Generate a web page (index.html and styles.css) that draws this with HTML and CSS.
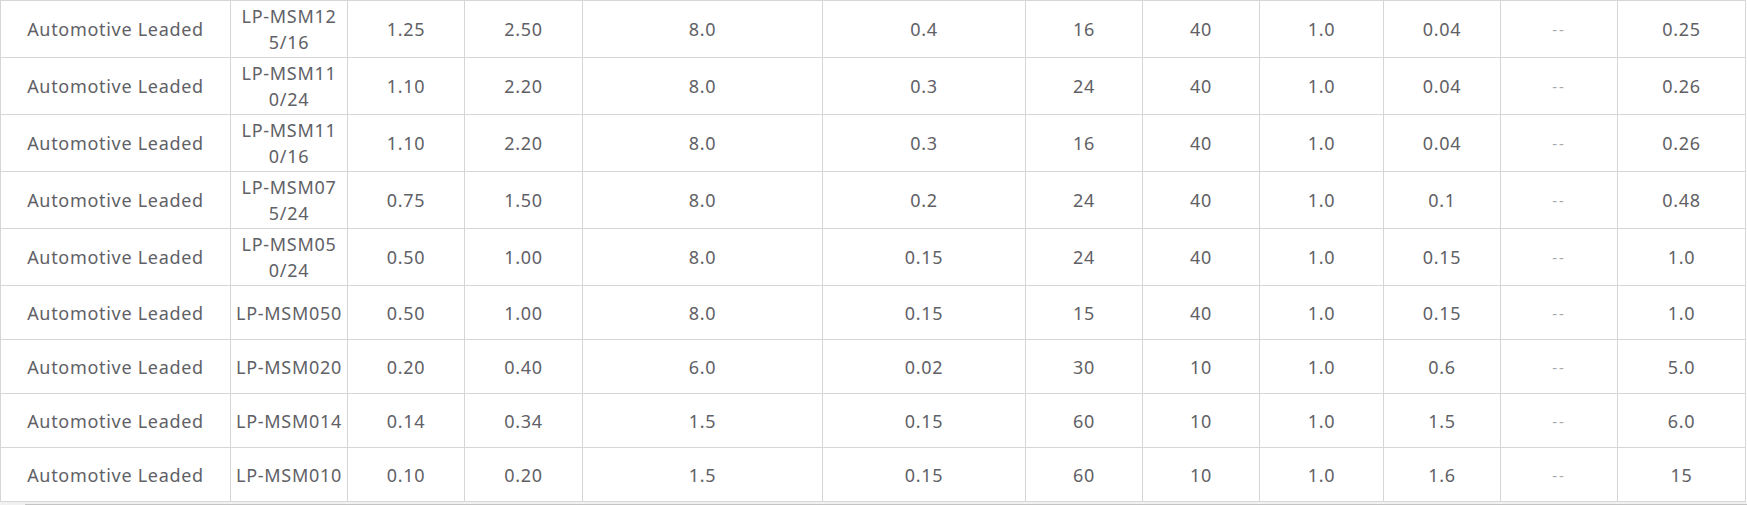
FILE: index.html
```html
<!DOCTYPE html>
<html lang="en">
<head>
<meta charset="utf-8">
<title>Table</title>
<link rel="stylesheet" href="styles.css">
</head>
<body>
<div class="wrap">
<table class="grid">
<colgroup>
<col class="c1"><col class="c2"><col class="c3"><col class="c4"><col class="c5"><col class="c6"><col class="c7"><col class="c8"><col class="c9"><col class="c10"><col class="c11"><col class="c12">
</colgroup>
<tbody>
<tr><td>Automotive Leaded</td><td>LP-MSM12<br>5/16</td><td>1.25</td><td>2.50</td><td>8.0</td><td>0.4</td><td>16</td><td>40</td><td>1.0</td><td>0.04</td><td class="dash">--</td><td>0.25</td></tr>
<tr><td>Automotive Leaded</td><td>LP-MSM11<br>0/24</td><td>1.10</td><td>2.20</td><td>8.0</td><td>0.3</td><td>24</td><td>40</td><td>1.0</td><td>0.04</td><td class="dash">--</td><td>0.26</td></tr>
<tr><td>Automotive Leaded</td><td>LP-MSM11<br>0/16</td><td>1.10</td><td>2.20</td><td>8.0</td><td>0.3</td><td>16</td><td>40</td><td>1.0</td><td>0.04</td><td class="dash">--</td><td>0.26</td></tr>
<tr><td>Automotive Leaded</td><td>LP-MSM07<br>5/24</td><td>0.75</td><td>1.50</td><td>8.0</td><td>0.2</td><td>24</td><td>40</td><td>1.0</td><td>0.1</td><td class="dash">--</td><td>0.48</td></tr>
<tr><td>Automotive Leaded</td><td>LP-MSM05<br>0/24</td><td>0.50</td><td>1.00</td><td>8.0</td><td>0.15</td><td>24</td><td>40</td><td>1.0</td><td>0.15</td><td class="dash">--</td><td>1.0</td></tr>
<tr><td>Automotive Leaded</td><td>LP-MSM050</td><td>0.50</td><td>1.00</td><td>8.0</td><td>0.15</td><td>15</td><td>40</td><td>1.0</td><td>0.15</td><td class="dash">--</td><td>1.0</td></tr>
<tr><td>Automotive Leaded</td><td>LP-MSM020</td><td>0.20</td><td>0.40</td><td>6.0</td><td>0.02</td><td>30</td><td>10</td><td>1.0</td><td>0.6</td><td class="dash">--</td><td>5.0</td></tr>
<tr><td>Automotive Leaded</td><td>LP-MSM014</td><td>0.14</td><td>0.34</td><td>1.5</td><td>0.15</td><td>60</td><td>10</td><td>1.0</td><td>1.5</td><td class="dash">--</td><td>6.0</td></tr>
<tr><td>Automotive Leaded</td><td>LP-MSM010</td><td>0.10</td><td>0.20</td><td>1.5</td><td>0.15</td><td>60</td><td>10</td><td>1.0</td><td>1.6</td><td class="dash">--</td><td>15</td></tr>
</tbody>
</table>
<div class="scroll"><div class="thumb"></div></div>
</div>
</body>
</html>
```
FILE: styles.css
```css
html, body {
  margin: 0;
  padding: 0;
  background: #ffffff;
}
.wrap {
  width: 1747px;
}
.grid {
  border-collapse: collapse;
  table-layout: fixed;
  width: 1746px;
  font-family: "Noto Sans", "Open Sans", sans-serif;
  font-size: 18px;
  letter-spacing: 0.7px;
  color: #5f6166;
}
.grid td {
  border: 1px solid #d6d6d6;
  text-align: center;
  vertical-align: middle;
  padding: 2px 0;
  height: 49px;
  line-height: 26px;
}
.c1 { width: 230px; }
.c2 { width: 117px; }
.c3 { width: 117px; }
.c4 { width: 118px; }
.c5 { width: 240px; }
.c6 { width: 203px; }
.c7 { width: 117px; }
.c8 { width: 117px; }
.c9 { width: 124px; }
.c10 { width: 117px; }
.c11 { width: 117px; }
.c12 { width: 128px; }
.grid td.dash {
  color: #a8a8a8;
  font-size: 15px;
  letter-spacing: 2px;
}
.scroll {
  height: 4px;
  background: #f1f1f1;
  padding: 2px 0 0 25px;
  box-sizing: border-box;
}
.thumb {
  height: 2px;
  background: #c4c4c4;
}
```
